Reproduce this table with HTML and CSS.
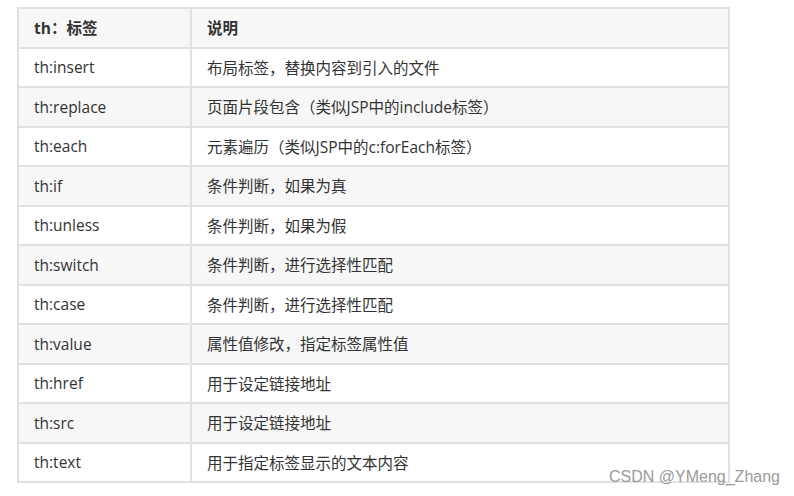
FILE: index.html
```html
<!DOCTYPE html>
<html lang="zh">
<head>
<meta charset="utf-8">
<link rel="stylesheet" href="styles.css">
</head>
<body>
<div class="page">
  <div class="table">
    <div class="cell head">th：标签</div><div class="cell head">说明</div>
    <div class="cell">th:insert</div><div class="cell">布局标签，替换内容到引入的文件</div>
    <div class="cell alt">th:replace</div><div class="cell alt">页面片段包含（类似JSP中的include标签）</div>
    <div class="cell">th:each</div><div class="cell">元素遍历（类似JSP中的c:forEach标签）</div>
    <div class="cell alt">th:if</div><div class="cell alt">条件判断，如果为真</div>
    <div class="cell">th:unless</div><div class="cell">条件判断，如果为假</div>
    <div class="cell alt">th:switch</div><div class="cell alt">条件判断，进行选择性匹配</div>
    <div class="cell">th:case</div><div class="cell">条件判断，进行选择性匹配</div>
    <div class="cell alt">th:value</div><div class="cell alt">属性值修改，指定标签属性值</div>
    <div class="cell">th:href</div><div class="cell">用于设定链接地址</div>
    <div class="cell alt">th:src</div><div class="cell alt">用于设定链接地址</div>
    <div class="cell">th:text</div><div class="cell">用于指定标签显示的文本内容</div>
  </div>
  <div class="watermark">CSDN @YMeng_Zhang</div>
</div>
</body>
</html>
```

FILE: styles.css
```css
html, body {
  margin: 0;
  padding: 0;
  background: #ffffff;
}
.page {
  position: relative;
  width: 794px;
  height: 496px;
  padding: 7px 0 0 17px;
  box-sizing: border-box;
}
.table {
  display: grid;
  grid-template-columns: 171px 536px;
  grid-auto-rows: 37.5px;
  gap: 2px;
  padding: 2px;
  width: max-content;
  background: #dfe2e5;
  font-family: "Open Sans", "Noto Sans CJK SC", sans-serif;
  font-size: 15.5px;
  color: #333333;
}
.cell {
  background: #ffffff;
  display: flex;
  align-items: center;
  padding-left: 15px;
  white-space: nowrap;
}
.cell.alt, .cell.head {
  background: #f7f7f7;
}
.cell.head {
  font-weight: bold;
}
.watermark {
  position: absolute;
  left: 609px;
  top: 468px;
  font-family: "Liberation Sans", Arial, sans-serif;
  font-size: 16px;
  color: #9a9a9a;
  white-space: nowrap;
}
```
